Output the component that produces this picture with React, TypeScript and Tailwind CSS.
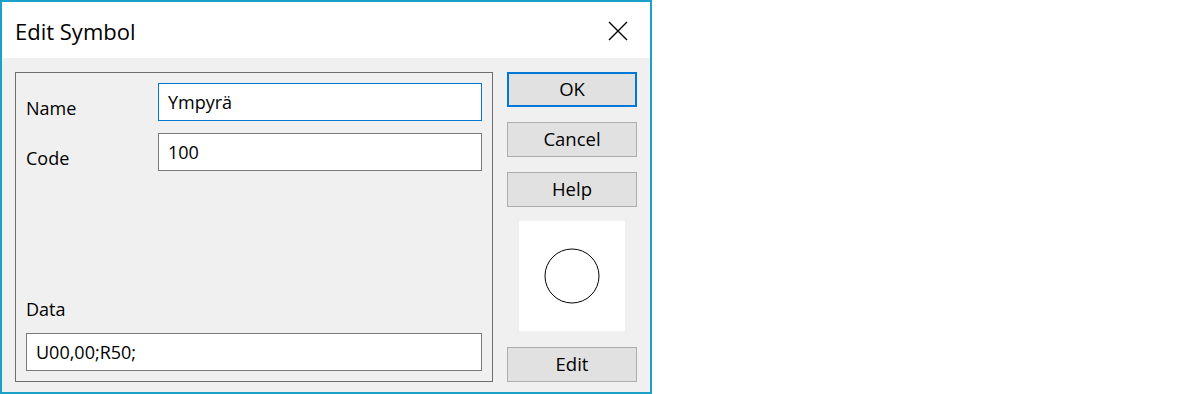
const font = { fontFamily: '"Open Sans", "Noto Sans", sans-serif' }

function TextBox({ value, focused }: { value: string; focused?: boolean }) {
  return (
    <div
      className={`flex h-[38px] items-center bg-white pl-[9px] text-[18px] text-black border ${
        focused ? 'border-[#0078d7]' : 'border-[#7a7a7a]'
      }`}
    >
      {value}
    </div>
  )
}

function DialogButton({ label, primary }: { label: string; primary?: boolean }) {
  return (
    <button
      type="button"
      className={`flex h-[35px] w-full items-center justify-center bg-[#e1e1e1] text-[18.5px] leading-none text-black ${
        primary ? 'border-2 border-[#0078d7]' : 'border border-[#adadad]'
      }`}
    >
      {label}
    </button>
  )
}

export default function App() {
  return (
    <div className="w-[1200px] h-[394px] bg-white" style={font}>
      <div className="flex h-[394px] w-[652px] flex-col border-2 border-[#1ba1c8] bg-white">
        {/* Title bar */}
        <div className="flex h-[56px] shrink-0 items-center justify-between pl-[13px] pr-[22px] pt-[3px]">
          <span className="text-[22px] text-black">Edit Symbol</span>
          <svg width="20" height="20" viewBox="0 0 20 20" className="-mt-[2px]">
            <path d="M1 1 L19 19 M19 1 L1 19" stroke="black" strokeWidth="1.4" fill="none" />
          </svg>
        </div>

        {/* Body */}
        <div className="flex flex-1 gap-[14px] bg-[#f0f0f0] pl-[13px] pr-[13px] pt-[14px] pb-[10px]">
          {/* Main panel */}
          <div className="flex w-[478px] flex-col border border-[#6e6e6e] px-[10px] pt-[10px] pb-[10px] text-[18px] text-black">
            <div className="grid grid-cols-[132px_1fr] gap-y-[12px]">
              <div className="h-[38px] pt-[13px] leading-[24px]">Name</div>
              <TextBox value="Ympyrä" focused />
              <div className="h-[38px] pt-[13px] leading-[24px]">Code</div>
              <TextBox value="100" />
            </div>
            <div className="mt-auto">
              <div className="mb-[12px] leading-[24px]">Data</div>
              <TextBox value="U00,00;R50;" />
            </div>
          </div>

          {/* Right column */}
          <div className="flex w-[130px] flex-col">
            <DialogButton label="OK" primary />
            <div className="mt-[15px]">
              <DialogButton label="Cancel" />
            </div>
            <div className="mt-[15px]">
              <DialogButton label="Help" />
            </div>
            <div className="mx-auto mt-[14px] flex h-[110px] w-[106px] items-center justify-center bg-white">
              <svg width="56" height="56" viewBox="0 0 56 56">
                <circle cx="28" cy="28" r="27" fill="none" stroke="black" strokeWidth="1" />
              </svg>
            </div>
            <div className="mt-auto">
              <DialogButton label="Edit" />
            </div>
          </div>
        </div>
      </div>
    </div>
  )
}
